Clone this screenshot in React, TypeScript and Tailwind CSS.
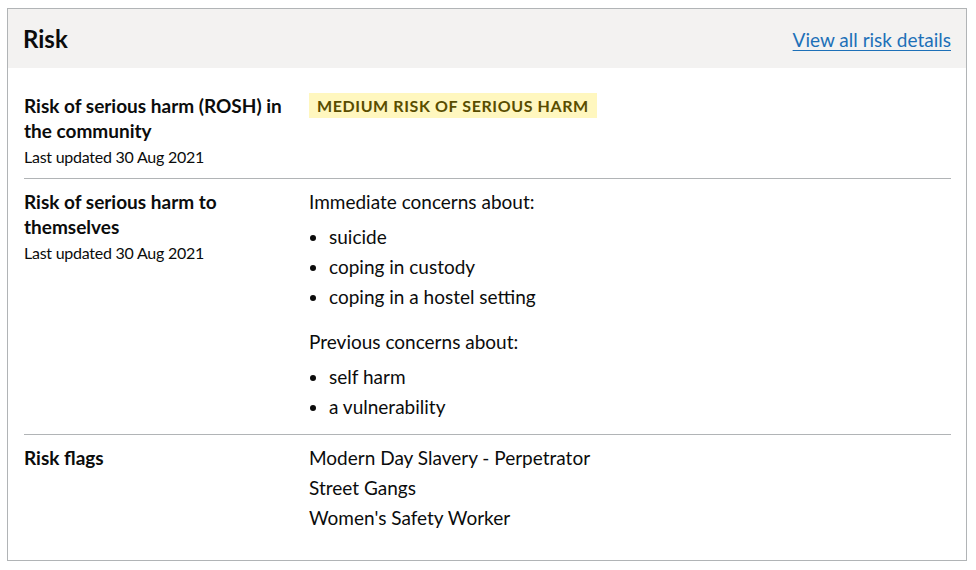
import React from "react";

function Key({ lines, updated }: { lines: string[]; updated?: string }) {
  return (
    <div className="pr-[20px]">
      <div className="font-bold text-[19px] leading-[25px]">
        {lines.join(" ")}
      </div>
      {updated && (
        <div className="mt-[3px] text-[16px] leading-[22px] tracking-[-0.25px]">{updated}</div>
      )}
    </div>
  );
}

function Bullets({ items, className }: { items: string[]; className: string }) {
  return (
    <ul className={"list-disc pl-[20px] flex flex-col gap-[5px] " + className}>
      {items.map((i) => (
        <li key={i} className="text-[19px] leading-[25px]">
          {i}
        </li>
      ))}
    </ul>
  );
}

export default function App() {
  return (
    <div
      className="pl-[7px] pt-[8px] bg-white min-h-[570px] text-[#0b0c0c]"
      style={{ fontFamily: "Lato, 'Liberation Sans', sans-serif" }}
    >
      <div className="w-[960px] border border-[#b1b4b6]">
        <div className="bg-[#f3f2f1] px-[15px] pt-[15px] pb-[14px] flex items-center justify-between">
          <h2 className="text-[24px] leading-[30px] font-bold">Risk</h2>
          <a
            href="#"
            className="text-[19px] leading-[25px] text-[#1d70b8] underline decoration-1 underline-offset-[3px]"
          >
            View all risk details
          </a>
        </div>
        <div className="pl-[16px] pr-[15px] pt-[15px] pb-[15px]">
          <div className="grid grid-cols-[285px_1fr] border-b border-[#b1b4b6] pt-[10px] pb-[10px]">
            <Key lines={["Risk of serious harm (ROSH) in the community"]} updated="Last updated 30 Aug 2021" />
            <div>
              <span className="inline-block bg-[#fff7bf] text-[#594d00] text-[16px] leading-[16px] font-bold uppercase tracking-[0.6px] px-[8px] pt-[5px] pb-[4px]">
                Medium risk of serious harm
              </span>
            </div>
          </div>
          <div className="grid grid-cols-[285px_1fr] border-b border-[#b1b4b6] pt-[10px] pb-[10px]">
            <Key lines={["Risk of serious harm to themselves"]} updated="Last updated 30 Aug 2021" />
            <div>
              <p className="text-[19px] leading-[25px] mb-[10px]">Immediate concerns about:</p>
              <Bullets items={["suicide", "coping in custody", "coping in a hostel setting"]} className="mb-[20px]" />
              <p className="text-[19px] leading-[25px] mb-[10px]">Previous concerns about:</p>
              <Bullets items={["self harm", "a vulnerability"]} className="mb-[5px]" />
            </div>
          </div>
          <div className="grid grid-cols-[285px_1fr] pt-[10px] pb-[10px]">
            <Key lines={["Risk flags"]} />
            <div className="flex flex-col gap-[5px] mb-[5px] text-[19px] leading-[25px]">
              <p>Modern Day Slavery - Perpetrator</p>
              <p>Street Gangs</p>
              <p>Women's Safety Worker</p>
            </div>
          </div>
        </div>
      </div>
    </div>
  );
}
